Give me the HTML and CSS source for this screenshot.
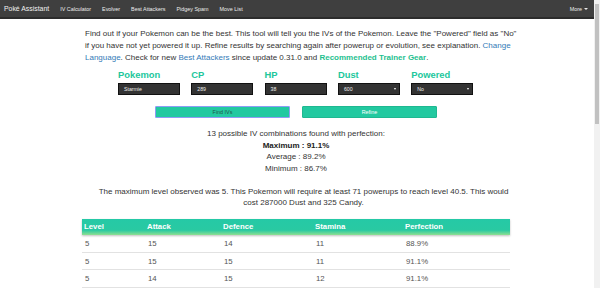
FILE: index.html
```html
<!DOCTYPE html>
<html>
<head>
<meta charset="utf-8">
<link rel="stylesheet" href="styles.css">
</head>
<body>
<div class="window">
  <div class="page">
    <nav class="navbar">
      <span class="brand">Poké Assistant</span>
      <a class="nav-link">IV Calculator</a>
      <a class="nav-link">Evolver</a>
      <a class="nav-link">Best Attackers</a>
      <a class="nav-link">Pidgey Spam</a>
      <a class="nav-link">Move List</a>
      <span class="nav-spacer"></span>
      <a class="nav-link more">More <span class="caret"></span></a>
    </nav>
    <div class="container">
      <p class="intro">Find out if your Pokemon can be the best. This tool will tell you the IVs of the Pokemon. Leave the "Powered" field as "No"<br>if you have not yet powered it up. Refine results by searching again after powerup or evolution, see explanation. <a class="link">Change Language</a>. Check for new <a class="link">Best Attackers</a> since update 0.31.0 and <a class="link-green">Recommended Trainer Gear</a>.</p>
      <div class="form-grid">
        <label class="field-label">Pokemon</label>
        <label class="field-label">CP</label>
        <label class="field-label">HP</label>
        <label class="field-label">Dust</label>
        <label class="field-label">Powered</label>
        <div class="input">Starmie</div>
        <div class="input">289</div>
        <div class="input">38</div>
        <div class="input select">600<span class="arrow"></span></div>
        <div class="input select">No<span class="arrow"></span></div>
      </div>
      <div class="buttons">
        <button class="btn btn-focus">Find IVs</button>
        <button class="btn btn-white">Refine</button>
      </div>
      <div class="results">
        <div>13 possible IV combinations found with perfection:</div>
        <div class="bold">Maximum : 91.1%</div>
        <div>Average : 89.2%</div>
        <div>Minimum : 86.7%</div>
      </div>
      <p class="level-note">The maximum level observed was 5. This Pokemon will require at least 71 powerups to reach level 40.5. This would<br>cost 287000 Dust and 325 Candy.</p>
      <table class="iv-table">
        <thead>
          <tr><th class="c1">Level</th><th class="c2">Attack</th><th class="c3">Defence</th><th class="c4">Stamina</th><th class="c5">Perfection</th></tr>
        </thead>
        <tbody>
          <tr><td>5</td><td>15</td><td>14</td><td>11</td><td>88.9%</td></tr>
          <tr><td>5</td><td>15</td><td>15</td><td>11</td><td>91.1%</td></tr>
          <tr><td>5</td><td>14</td><td>15</td><td>12</td><td>91.1%</td></tr>
        </tbody>
      </table>
    </div>
  </div>
  <div class="scrollbar">
    <div class="sb-arrow"></div>
    <div class="sb-thumb"></div>
    <div class="sb-track"></div>
    <div class="sb-arrow"></div>
  </div>
</div>
</body>
</html>
```
FILE: styles.css
```css
* { box-sizing: border-box; }
html, body { margin: 0; padding: 0; }
body {
  font-family: "Liberation Sans", Arial, sans-serif;
  color: #333;
  background: #fff;
  width: 600px;
  height: 288px;
  overflow: hidden;
}
.window {
  display: flex;
  height: 288px;
}
.page {
  flex: 1;
  min-width: 0;
  overflow: hidden;
}
.navbar {
  display: flex;
  align-items: center;
  height: 19px;
  background: #3f3f3f;
  border-bottom: 2px solid #2c2c2c;
  padding: 0 6px 0 4px;
  gap: 11px;
}
.brand {
  color: #f2f2f2;
  font-size: 6.9px;
}
.nav-link {
  color: #ececec;
  font-size: 5.4px;
}
.nav-spacer { flex: 1; }
.more { display: flex; align-items: center; gap: 2px; }
.caret {
  display: inline-block;
  width: 0; height: 0;
  border-left: 2px solid transparent;
  border-right: 2px solid transparent;
  border-top: 2px solid #e8e8e8;
}
.container {
  padding-left: 85px;
  width: 530px;
}
.intro {
  margin: 9px 0 0 0;
  font-size: 8px;
  line-height: 11.8px;
}
.link { color: #337ab7; }
.link-green { color: #1fbf8f; font-weight: bold; }
.form-grid {
  display: grid;
  grid-template-columns: repeat(5, 62px);
  column-gap: 11.3px;
  margin: 6px 0 0 33px;
}
.field-label {
  color: #22c79c;
  font-weight: bold;
  font-size: 9.4px;
  line-height: 12px;
  height: 14px;
}
.input {
  position: relative;
  height: 12px;
  background: #333;
  border: 1px solid #111;
  color: #eee;
  font-size: 5.2px;
  line-height: 10px;
  padding-left: 5px;
}
.arrow {
  position: absolute;
  right: 3px;
  top: 4px;
  width: 0; height: 0;
  border-left: 1.5px solid transparent;
  border-right: 1.5px solid transparent;
  border-top: 2px solid #fff;
}
.buttons {
  display: flex;
  gap: 12px;
  margin: 11px 0 0 70px;
}
.btn {
  width: 135px;
  height: 12px;
  background: #22c9a0;
  border: 1px solid #1fb891;
  border-radius: 1px;
  font-family: "Liberation Sans", Arial, sans-serif;
  font-size: 5.4px;
  padding: 0;
  line-height: 10px;
}
.btn-focus {
  border-color: #8e9cf5;
  color: #22574a;
}
.btn-white { color: #fff; }
.results {
  width: 428px;
  margin: 10px 0 0 -3px;
  text-align: center;
  font-size: 8px;
  line-height: 11.4px;
}
.bold { font-weight: bold; color: #222; }
.level-note {
  width: 437px;
  margin: 12px 0 0 0;
  text-align: center;
  font-size: 8px;
  line-height: 11.4px;
}
.iv-table {
  margin: 10px 0 0 -3px;
  width: 428px;
  border-collapse: collapse;
  font-size: 7.8px;
  table-layout: fixed;
}
.iv-table thead tr {
  background: linear-gradient(#25c9a6 0%, #29c9a2 70%, #8fdf91 100%);
  box-shadow: 0 1px 2px rgba(0,0,0,0.25);
}
.iv-table th {
  color: #fff;
  text-align: left;
  font-weight: bold;
  height: 16px;
  padding: 0 2px;
}
.c1 { width: 63px; }
.c2 { width: 76px; }
.c3 { width: 92px; }
.c4 { width: 90px; }
.c5 { width: 107px; }
.iv-table td {
  color: #555;
  height: 17.5px;
  padding: 0 3px;
  border-bottom: 1px solid #e2e2e2;
}
.scrollbar {
  width: 6px;
  display: flex;
  flex-direction: column;
  background: #f1f1f1;
}
.sb-arrow { height: 4px; }
.sb-thumb {
  height: 120px;
  margin: 0 1px;
  background: #c1c1c1;
}
.sb-track { flex: 1; }
```
